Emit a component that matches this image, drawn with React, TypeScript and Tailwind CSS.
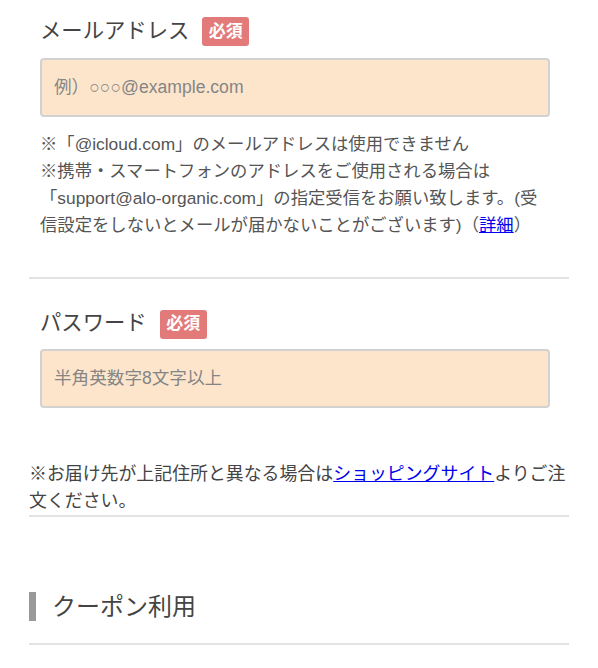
import React from "react";

const FONT = { fontFamily: '"Liberation Sans", "Noto Sans CJK JP", sans-serif' };

function Badge() {
  return (
    <span className="ml-[13px] inline-flex h-[29px] w-[47px] items-center justify-center rounded-[3px] bg-[#e27a7a] text-[17px] font-semibold text-white">
      必須
    </span>
  );
}

export default function App() {
  return (
    <div className="min-h-[668px] w-[598px] bg-white text-[#444]" style={FONT}>
      <div className="px-[29px]">
        {/* Email */}
        <div className="pl-[11px] pr-[19px] pt-[17px]">
          <div className="flex h-[29px] items-center">
            <span className="text-[21.33px] leading-none text-[#444]">メールアドレス</span>
            <Badge />
          </div>
          <div className="mt-[12px] flex h-[59px] items-center rounded-[4px] border-2 border-[#d2d2d2] bg-[#fde5cc] px-[12px] text-[17.6px] text-[#858585]">
            例）○○○@example.com
          </div>
          <p className="mt-[14px] text-[17.33px] leading-[27px] text-[#555]">
            ※「@icloud.com」のメールアドレスは使用できません
            <br />
            ※携帯・スマートフォンのアドレスをご使用される場合は
            <br />
            「support@alo-organic.com」の指定受信をお願い致します。(受信設定をしないとメールが届かないことがございます)（
            <a href="#" className="text-[#0000ee] underline">
              詳細
            </a>
            ）
          </p>
        </div>

        <div className="mt-[38px] h-[2px] bg-[#e3e3e3]" />

        {/* Password */}
        <div className="pl-[11px] pr-[19px] pt-[31px]">
          <div className="flex h-[28px] items-center">
            <span className="text-[21.33px] leading-none text-[#444]">パスワード</span>
            <Badge />
          </div>
          <div className="mt-[11px] flex h-[59px] items-center rounded-[4px] border-2 border-[#d2d2d2] bg-[#fde5cc] px-[12px] text-[17.6px] text-[#858585]">
            半角英数字8文字以上
          </div>
        </div>

        <p className="mt-[53px] text-[17.9px] leading-[27px] text-[#444]">
          ※お届け先が上記住所と異なる場合は
          <a href="#" className="text-[#0000ee] underline">
            ショッピングサイト
          </a>
          よりご注文ください。
        </p>
        <div className="h-[2px] bg-[#e3e3e3]" />

        {/* Coupon */}
        <div className="mt-[75px] flex h-[29px] items-center">
          <div className="h-[29px] w-[7px] bg-[#999]" />
          <span className="ml-[16px] text-[24px] leading-none text-[#444]">クーポン利用</span>
        </div>
        <div className="mt-[22px] h-[2px] bg-[#e3e3e3]" />
      </div>
    </div>
  );
}
